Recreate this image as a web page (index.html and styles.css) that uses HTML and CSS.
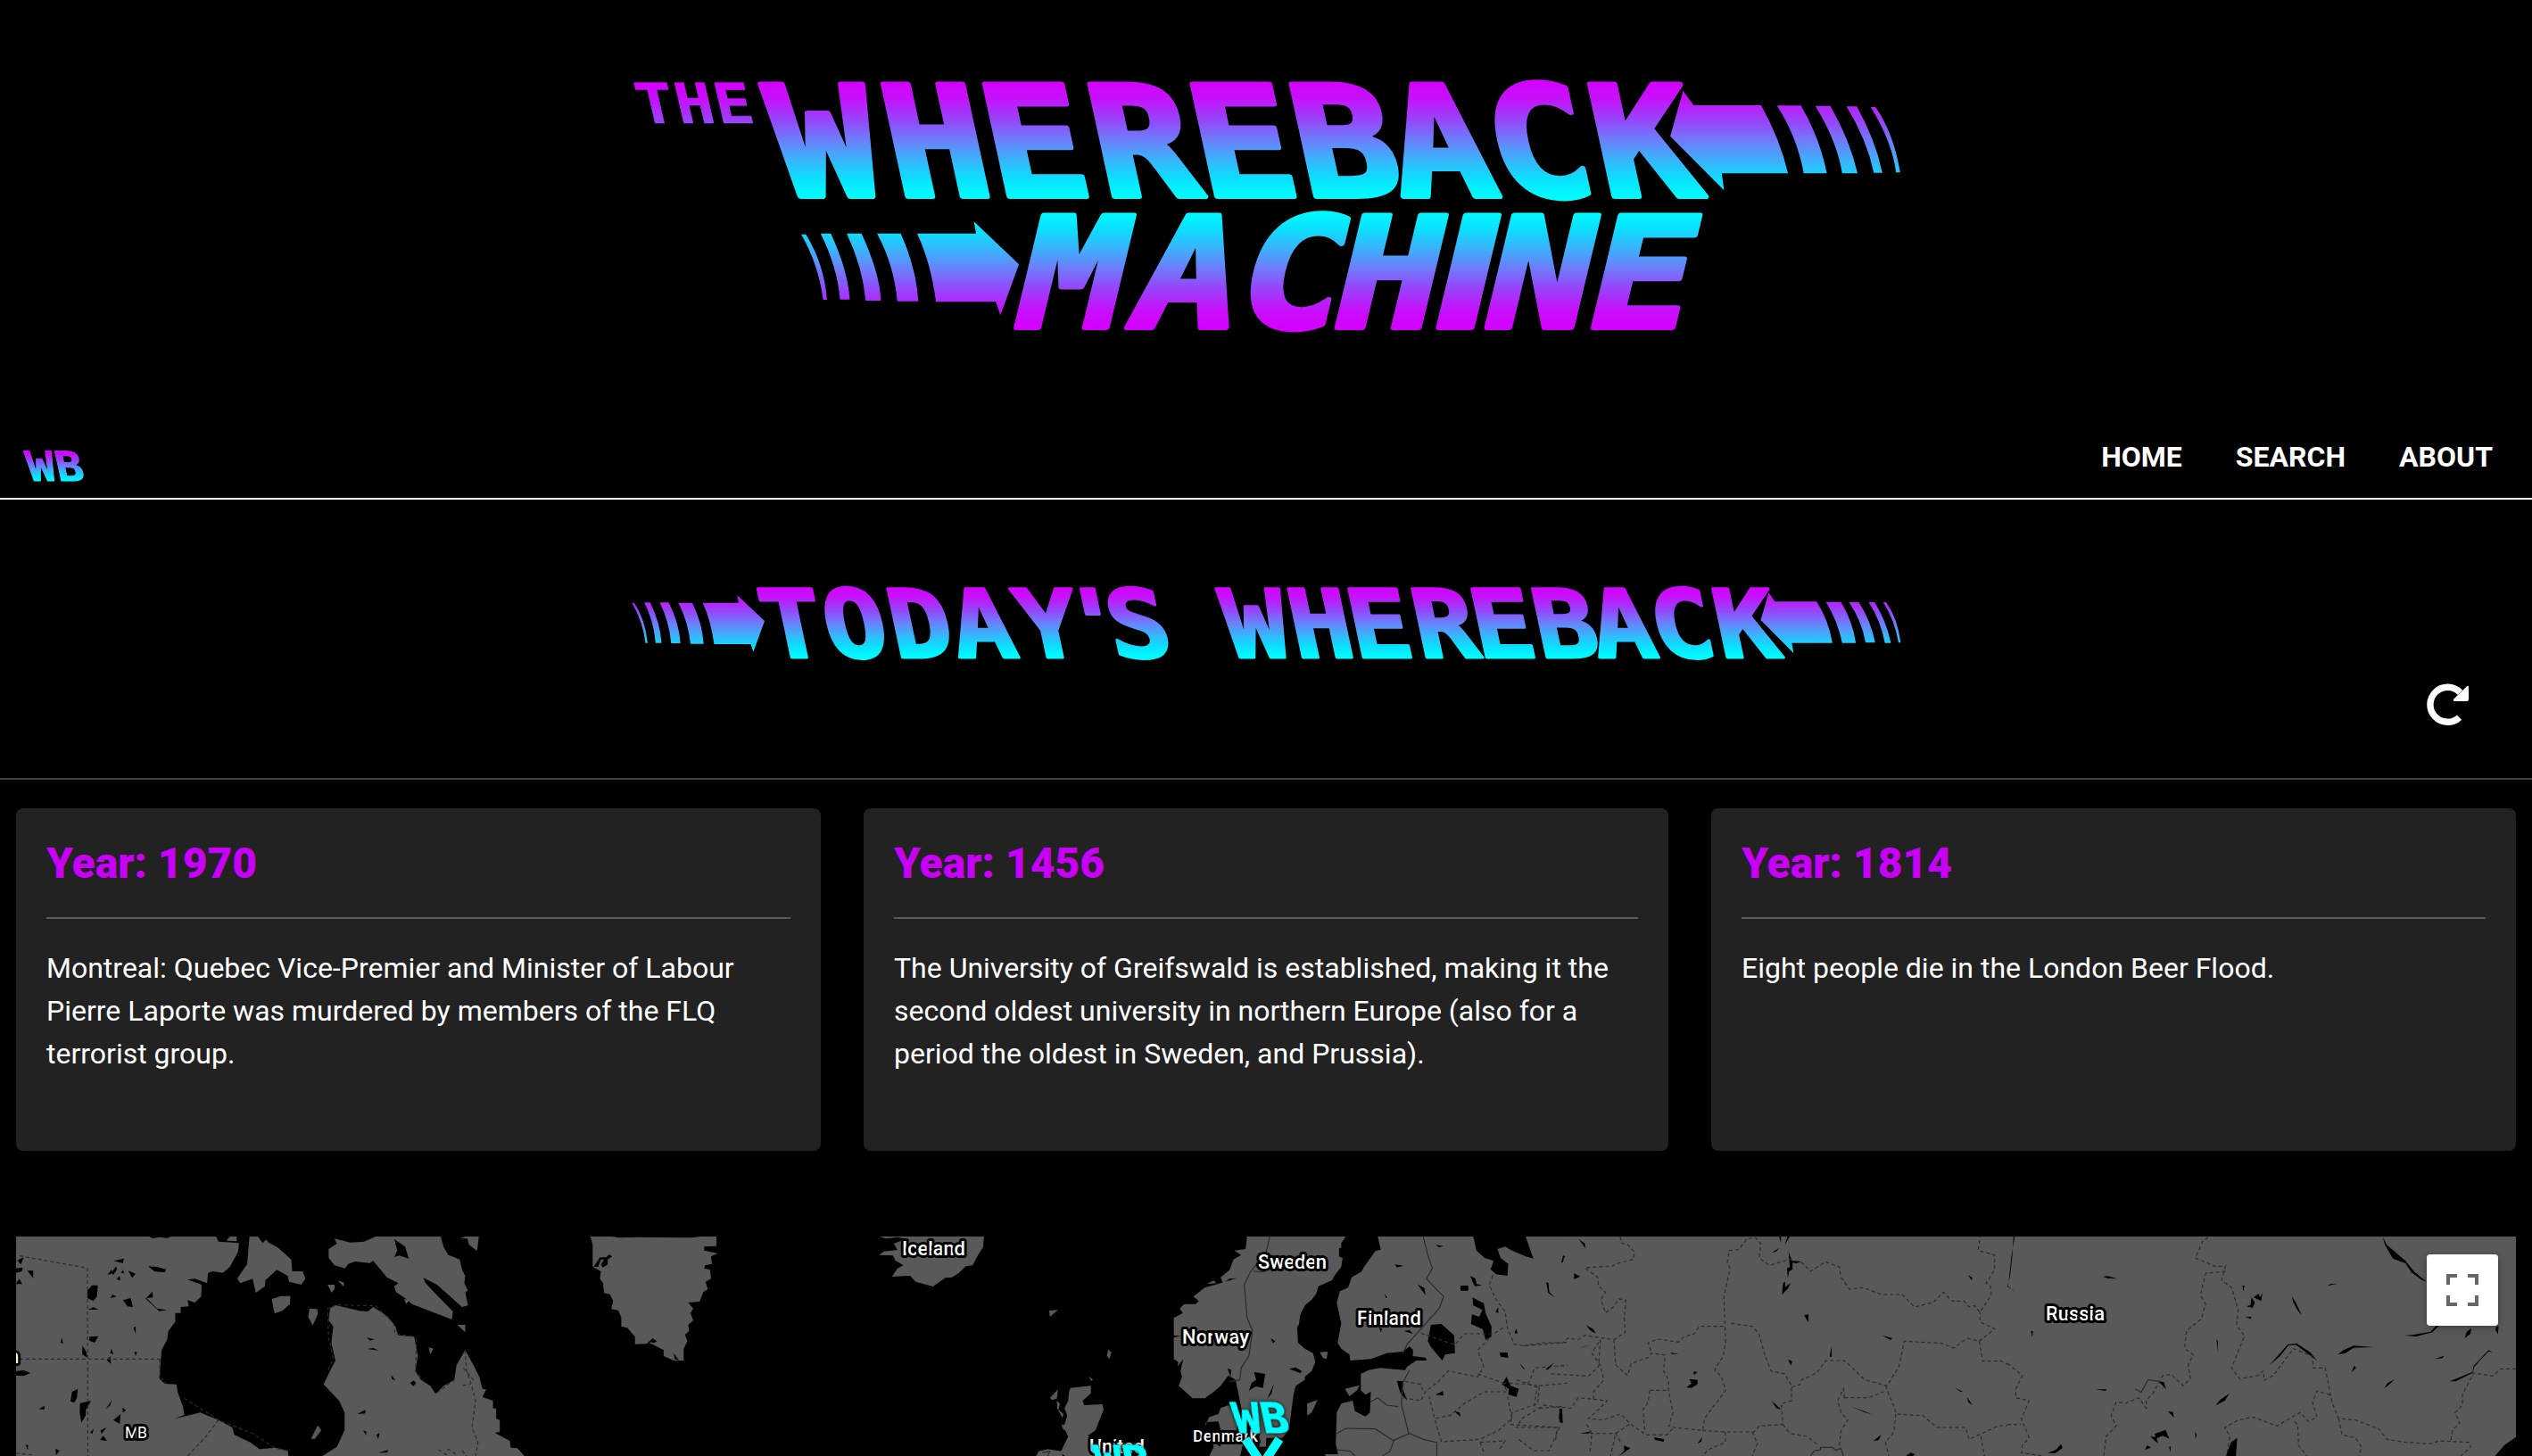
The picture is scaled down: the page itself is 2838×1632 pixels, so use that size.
FILE: index.html
```html
<!DOCTYPE html>
<html lang="en">
<head>
<meta charset="utf-8">
<title>The Whereback Machine</title>
<link rel="stylesheet" href="styles.css">
</head>
<body>
<svg class="defs" width="0" height="0" aria-hidden="true">
  <defs>
    <linearGradient id="word" gradientUnits="userSpaceOnUse" x1="0" y1="-130" x2="0" y2="0">
      <stop offset="0" stop-color="#d400ff"/><stop offset=".15" stop-color="#c710fb"/><stop offset=".35" stop-color="#9448fa"/><stop offset=".5" stop-color="#707afa"/><stop offset=".68" stop-color="#3bb2fc"/><stop offset=".85" stop-color="#0be0ff"/><stop offset="1" stop-color="#00fbff"/>
    </linearGradient>
    <linearGradient id="wordUp" href="#word" y1="0" y2="-130"/>
    <linearGradient id="small" href="#word" y1="-80" y2="0"/>
    <linearGradient id="mini" href="#word" y1="-35" y2="0"/>
    <linearGradient id="the" href="#word" y1="-46" y2="84"/>
    <linearGradient id="arrowTop" href="#word" y1="66" y2="457"/>
    <linearGradient id="arrowUp" href="#word" y1="897" y2="508"/>
    <linearGradient id="arrowSmall" href="#word" y1="54" y2="293"/>
  </defs>
</svg>

<header class="banner">
  <svg class="logo" viewBox="709 70 1421 320" role="img" aria-label="The Whereback Machine">
    <text class="face thin" transform="translate(0 138) skewX(13) scale(1.15 1)" fill="url(#the)" stroke="url(#the)" font-size="62" x="643 681 719">THE</text>
    <text class="face" transform="translate(0 220) skewX(12.300) scale(1.100 1)" fill="url(#word)" stroke="url(#word)" font-size="172" x="851.800 965.500 1066.400 1176.400 1278 1382.500 1479 1580 1687">WHEREBACK</text>
    <text class="face" transform="translate(0 367) skewX(-13.500) scale(1.130 1)" fill="url(#wordUp)" stroke="url(#wordUp)" font-size="172" x="1053 1167 1272 1367 1443.500 1517 1618.500">MACH<tspan class="plain">I</tspan>NE</text>
    <g transform="translate(1400 70) scale(.4783 .33333)" fill="url(#arrowTop)">
      <path d="M1017 96L1042 144H1200Q1245 260 1263 373H1108L1113 430L987 248Z"/>
      <path d="M1237 145H1293Q1337 250 1354 373H1300Q1284 250 1237 145ZM1327 146H1362Q1408 260 1426 373H1390Q1378 265 1327 146ZM1400 148H1424Q1468 260 1484 371H1464Q1448 260 1400 148ZM1457 150H1468Q1510 235 1526 370H1516Q1508 270 1457 150Z"/>
    </g>
    <g transform="translate(690 70) scale(.47194 .33333)" fill="url(#arrowUp)">
      <path d="M716 575H856L851 535L958 679L914 850L903 805H761Q748 670 716 575Z"/>
      <path d="M621 575H677Q714 690 719 803H669Q661 680 621 575ZM549 575H584Q628 710 630 801H594Q587 690 549 575ZM487 575H511Q552 700 556 797H533Q527 690 487 575ZM441 578H452Q496 680 502 798H493Q482 680 441 578Z"/>
    </g>
  </svg>
  <nav class="nav">
    <svg class="brand" viewBox="20 500 80 44" role="img" aria-label="WB">
      <text class="face hair" transform="translate(0 539) skewX(12.500) scale(1.120 1)" fill="url(#mini)" stroke="url(#mini)" font-size="46" x="44 72.500">WB</text>
    </svg>
    <div class="links"><a>HOME</a><a>SEARCH</a><a>ABOUT</a></div>
  </nav>
</header>

<section class="today">
  <svg class="today-title" viewBox="709 650 1421 100" role="img" aria-label="Today's Whereback">
    <text class="face medium" xml:space="preserve" transform="translate(0 736.500) skewX(12) scale(1.100 1)" fill="url(#small)" stroke="url(#small)" font-size="106" x="814.500 878 944.500 1008 1075 1123 1167 1223 1286 1352.700 1412.700 1479 1538 1602 1660 1721 1786">TODAY'S WHEREBACK</text>
    <g transform="translate(1400 640) scale(.4783 .33333)" fill="url(#arrowSmall)">
      <path d="M1218 73L1232 103H1330Q1358 165 1367 242H1272L1276 276L1199 165Z"/>
      <path d="M1352 104H1387Q1415 170 1422 242H1390Q1380 170 1352 104ZM1406 105H1429Q1458 170 1467 241H1445Q1435 165 1406 105ZM1452 105H1466Q1494 170 1504 242H1490Q1480 165 1452 105ZM1486 105H1493Q1520 160 1527 241H1522Q1513 165 1486 105Z"/>
    </g>
    <g transform="translate(690 640) scale(.47194 .33333)" fill="url(#arrowSmall)">
      <path d="M207 107H292L289 82L354 168L327 272L321 246H234Q226 165 207 107Z"/>
      <path d="M149 107H182Q206 175 209 245H178Q172 170 149 107ZM105 106H126Q151 175 154 243H132Q127 170 105 106ZM68 106H82Q106 175 109 242H95Q90 165 68 106ZM39 107H44Q70 160 76 242H71Q65 170 39 107Z"/>
    </g>
  </svg>
  <div class="tools">
    <svg class="refresh" viewBox="0 0 48 48" role="img" aria-label="Refresh">
      <path d="M36.600 38.200A19.500 19.500 0 1 1 37.500 10.300" fill="none" stroke="#fff" stroke-width="7.400"/>
      <path d="M45.300 3Q47 2.200 47 4.500V18Q47 20 45 20H32Q29 20 30.300 17.500Z" fill="#fff"/>
    </svg>
  </div>
</section>

<main class="content">
  <div class="cards">
    <article class="card"><h2>Year: 1970</h2><p>Montreal: Quebec Vice-Premier and Minister of Labour Pierre Laporte was murdered by members of the FLQ terrorist group.</p></article>
    <article class="card"><h2>Year: 1456</h2><p>The University of Greifswald is established, making it the second oldest university in northern Europe (also for a period the oldest in Sweden, and Prussia).</p></article>
    <article class="card"><h2>Year: 1814</h2><p>Eight people die in the London Beer Flood.</p></article>
  </div>

  <div class="map">
    <svg class="tiles" viewBox="18 1386 2802 246">
      <!-- North America and Greenland -->
      <g transform="translate(0 1370) scale(.5102 .33333)">
        <path class="land" d="M35 48H1152V786H35Z"/>
        <path class="water" d="M475 48L480 65 525 70 523 100 505 150 490 170 467 165 457 170 455 205 428 190 412 193 443 210 442 250 428 270 412 262 415 283 397 285 397 305 385 305 385 335 370 365 367 395 355 430 350 525 362 543 388 545 390 570 402 620 405 648 383 661 440 640 480 665 510 690 515 715 550 740 570 763 605 758 632 768 634 786H708L740 755 757 700 757 640 745 600 711 545 725 500 737 465 728 405 732 350 722 330 725 290 735 278 790 298 808 300 820 285 850 315 868 348 875 380 910 385 918 450 912 500 925 530 945 550 957 577 975 550 998 530 1003 480 1022 430 1040 480 1053 520 1060 560 1068 562 1060 588 1083 600 1083 625 1090 628 1090 660 1098 665 1098 705 1087 708 1120 735 1122 758 1137 760 1152 786H1300V48Z"/>
        <path class="land" d="M548 48L543 140 521 190 528 205 555 190 562 237 582 215 583 195 608 160 632 180 635 200 662 210 671 190 665 165 642 165 640 125 610 85 590 68 585 58 577 70 567 48Z"/>
        <path class="land" d="M735 55L770 68 800 65 825 48H968L975 85 985 110 1010 125 1015 160 1022 180 1020 205 1028 230 1022 235 1028 280 1015 285 960 210 930 187 935 205 960 245 995 300 993 327 905 275 890 255 870 235 866 215 875 205 850 185 820 130 812 137 780 132 765 140 758 155 735 145 722 120 722 90 740 72ZM1012 54L1027 55 1030 75 1048 97 1052 48H1022ZM597 258L617 248 638 248 637 275 620 298 603 307ZM680 290L697 292 698 310 687 347 677 318ZM720 210L735 210 735 225 728 237ZM742 196L756 203 755 217ZM1005 345H1022V370ZM942 420L952 425 945 445ZM683 728L698 683 706 700 692 728ZM497 62L505 48H520V64ZM888 258L900 262 892 275Z"/>
        <path class="land" d="M1297 48L1302 75V150L1320 165 1318 190 1325 205 1327 238 1340 242 1347 265 1343 292 1358 296 1365 320V350L1378 355 1395 385 1395 410 1430 408 1458 430 1458 450 1480 465H1502V425L1510 400 1505 378 1514 365 1512 345 1523 330 1517 305 1523 290 1512 270 1537 267 1545 235 1555 225 1550 200 1562 190 1560 160 1547 155 1549 145 1564 140 1562 115 1577 105 1547 95V82L1574 80V48Z"/>
        <path class="water" d="M866 57L890 82 898 122 878 112 866 117 873 95ZM192 230L202 212H215L213 250 205 265 192 255ZM250 130L272 122 270 138ZM325 148L345 150 365 158 362 168 340 166ZM236 178L245 158 247 172ZM246 168L255 148 257 160 248 178ZM256 193L262 180 265 195ZM270 160L273 172 266 170ZM282 163L298 173 290 187ZM60 163H73V188ZM35 155L50 152 48 165 35 170ZM38 128L52 118 46 142ZM35 208L42 190 49 208ZM243 255L247 243 256 250ZM270 262L287 255 292 285 280 283ZM193 294L205 286 217 293ZM335 233L336 253 322 255 345 290 367 295 350 299 320 257ZM197 385L216 383 208 405 196 398ZM181 415L190 437 192 455 181 445ZM133 405L136 388 139 408ZM293 355L298 350V375ZM242 440L245 425 249 444ZM235 465L242 450 244 476ZM295 436L301 437 298 450ZM35 500L53 498 67 507 52 517 35 515ZM155 602L158 570 171 560 169 590 163 607ZM176 608L200 600 189 630 188 650 179 674 175 640ZM233 628L246 597 242 616ZM249 665L265 645 263 678ZM85 628L98 617 97 630ZM198 706L206 696 203 712ZM221 700L234 690 223 712ZM220 732L227 718 235 735ZM56 748L62 750 61 766ZM122 762L131 768 123 783ZM269 623L277 632 270 640ZM806 388L822 394 813 398ZM806 426L820 423 832 431ZM859 514L869 531 861 528ZM785 645L803 630 802 643ZM798 700L805 704 804 716ZM827 715L834 708 831 730ZM831 775L853 766 850 775ZM901 541L909 532 914 541 908 551ZM1304 150L1318 118 1332 118 1338 108 1345 115 1335 125 1335 142 1325 152 1320 143 1327 125 1320 125 1314 150ZM1421 408L1434 390 1443 400 1437 406 1429 403 1425 412ZM1480 440L1492 465 1482 460ZM328 48H375L368 53 350 50 335 54ZM1345 48H1538L1520 52 1400 50 1360 52Z"/>
        <path class="border dash" d="M43 113L192 154 193 786M43 460H352M480 665L450 725 412 786M35 777L75 783M405 592L480 665 555 710 605 760 632 768M722 400L720 290 740 278 825 281 865 340 868 375 910 385M725 405L732 460 720 500M350 460L352 520 365 543M1022 430L1025 500 1035 545 1045 600 1037 690 1050 740 1045 786M1018 490L1040 530 1032 545 1015 550M963 765L985 786M983 762L1005 783M1015 768L1025 786M915 390L913 500 930 535M960 573L998 530"/>
      </g>

      <!-- Northern Europe -->
      <g transform="translate(960 1370) scale(.5102 .33333)">
        <path class="land" d="M50 48H280L278 85 267 110 255 145 240 148 225 170 210 185 195 187 168 216 130 200 118 180 78 183 90 155 103 145 85 128 80 112 50 110 60 98 90 93 82 72 98 62 118 58 90 50 65 55Z"/>
        <path class="land" d="M858 48H1075L1065 70 1065 85 1060 88 1060 115 1068 120 1065 150 1050 180 1045 195 1015 215 1010 240 1000 260 985 280 975 310 972 345 968 350 970 405 985 425 1003 440 1008 470 1000 500 985 520 985 530 965 550 960 580 955 640 950 700 935 725 900 725 900 755H885V700L850 660 833 530 817 515 800 550 785 570 765 592H738L708 550 715 520 712 500 718 460 705 485 707 470 697 460V322L717 305 710 290 720 275H745L752 265 740 250 765 220 800 205 835 188 820 190 805 205 800 185 820 160 828 125 845 110 830 95 855 90Z"/>
        <path class="land" d="M1145 48L1152 92 1140 97 1115 150 1110 165 1088 185 1080 220 1062 232 1055 270 1065 340 1057 405 1065 425 1083 445 1085 465 1130 460 1165 440 1200 435 1215 418 1223 430 1222 450 1250 455 1253 465 1230 465 1210 485 1205 497 1150 490 1125 497 1108 510 1108 565 1118 580 1130 570 1128 640 1118 653 1095 635 1090 600 1065 610 1055 640 1053 745 1058 780 1030 780V786H1570V48Z"/>
        <path class="land" d="M765 690L775 655 795 645 800 625 817 615 835 650V700L800 698 795 670 768 672ZM775 786L785 755 780 735 800 755 850 740 843 786ZM800 745H835V786H800ZM1018 437L1035 435 1033 460 1025 457ZM1073 560L1105 548 1100 565 1083 585ZM990 650V610L1013 597 1000 640ZM470 557L515 550 515 575 497 600 500 615 540 612 543 630 525 700 508 718 565 786H458L448 775 465 720 455 690 463 650 457 625 465 600 467 570ZM395 786L400 770 420 763 452 770V786ZM425 590L443 562 440 593 430 598ZM440 600L447 610 444 630 455 645 452 658 441 625ZM550 450L553 428 560 437 556 460ZM423 297L443 295 425 318ZM510 518L520 530 515 533ZM450 680L465 683 455 700ZM770 208L785 195 790 205Z"/>
        <path class="water" d="M873 503L898 510 893 557 877 552 862 567 868 540 878 530ZM902 595L917 543 912 575ZM950 493L965 488 978 500 975 507ZM910 390L920 400 915 407ZM695 380L712 382 697 388ZM815 492L823 495 822 520ZM1183 142L1202 146 1187 152ZM1232 208L1248 222 1250 245ZM1160 240L1166 253 1163 255ZM1203 366L1215 362 1222 375ZM1148 355L1155 358 1152 370ZM1272 76L1290 80 1280 84ZM1355 48H1470L1487 122 1470 115 1440 95 1425 82 1408 90 1415 120 1432 140 1430 180 1405 175 1393 158 1400 130 1380 120 1362 95ZM1255 400L1262 345 1285 342 1300 362 1313 380 1315 440 1293 445 1287 465 1262 420ZM1353 253L1378 272 1383 310 1395 350V385L1382 395 1376 360 1350 342 1352 310 1368 318 1375 295 1355 280ZM1348 180L1360 190 1362 208 1375 212 1358 215ZM1327 213H1344V230H1327ZM1404 302L1410 285V305ZM1413 438H1430L1432 456 1415 452ZM1418 545L1428 520 1437 550 1455 560 1450 587 1432 580 1433 560ZM1272 580L1288 568 1290 583ZM1313 635L1325 640 1327 655ZM1187 533L1202 535 1200 560 1210 600 1195 575ZM1457 473L1469 496 1463 490ZM1513 497L1533 472 1520 490ZM1515 202L1520 205 1522 235 1535 253 1522 240ZM1445 372L1450 358 1452 375ZM1548 135L1555 110 1552 135ZM1545 625L1550 630 1549 675 1543 660Z"/>
        <path class="border" d="M908 48L900 100 865 168 852 210 858 320 870 365 862 450 845 490 842 530 820 536M897 167L872 165M1245 48L1255 110 1265 155 1252 190 1290 250 1280 290 1210 410 1200 440M1215 497L1200 540 1197 610 1213 710M1128 605L1145 590 1165 615 1190 620M1055 710L1075 693 1140 695 1180 735 1172 770 1155 786M1180 733L1215 710 1245 730 1275 740V786M1055 765L1085 770 1095 786M408 775L425 770 420 786"/>
        <path class="border dash" d="M1398 178L1390 210 1405 260 1425 300 1430 355 1445 410 1465 415 1568 403M1240 373L1315 412 1335 375H1400L1425 350M1390 390L1365 430 1378 485 1365 520 1300 500 1275 540 1250 570 1240 600 1200 590M1365 510L1420 540 1430 570 1380 570 1335 610 1305 650 1270 660 1258 585M1420 540L1475 545 1500 550 1497 610 1440 640 1437 680 1540 690 1535 740M1430 585L1440 660 1410 700 1370 730 1285 738 1270 660M1205 535L1240 545 1245 570M1500 550L1568 540M1500 625L1550 620M1370 740L1380 780M1370 740L1425 735 1410 770M1475 545L1490 490 1568 480"/>
      </g>

      <!-- Western Russia -->
      <g transform="translate(1700 1370) scale(.38265 .33333)">
        <path class="land" d="M150 48H1470V786H150Z"/>
        <path class="water" d="M182 57L200 72 201 87ZM132 130L136 112 142 115ZM168 172L186 182 168 192ZM87 202L92 205 95 238 113 253 92 237ZM203 346L225 360 232 374 217 365ZM185 422L218 411 192 421ZM84 495L110 472 92 495ZM768 48H774V68ZM785 76L793 48H800ZM747 102L770 86 760 98ZM796 97L806 130 835 132 820 138 808 136 808 158 798 165 794 188 792 155 800 150ZM780 205L787 200 786 218 802 205 795 222 777 244ZM842 312L855 310 854 337ZM1070 380L1100 390 1095 396ZM922 416L923 452 917 452ZM795 461L807 468 803 482ZM450 438L475 443 455 443ZM518 502L530 504 519 513ZM506 527L530 530 529 545 512 557 497 555 512 543ZM747 600L775 630 760 625ZM978 619L1040 645 1020 640ZM1283 556L1307 570 1300 570ZM1319 588L1335 615 1323 605ZM1045 735L1068 714 1060 733ZM1142 783L1155 775 1167 781 1160 786H1142ZM402 723L432 730 430 738 405 732ZM529 745L544 722 540 738ZM314 751L333 760 300 786 315 768ZM125 628H133L135 675 126 673ZM185 710L220 703 210 710ZM1322 178L1335 187 1332 195ZM1505 366H1512L1509 384ZM1456 48H1461L1450 180 1441 215 1455 226 1488 278 1452 230 1438 217 1448 180Z"/>
        <path class="border dash" d="M303 48L307 70 325 75 345 100 342 125 300 137 280 147 200 153 237 185 240 215 260 235 247 260 260 305 282 285 300 258 320 262 315 320 318 370 285 395 225 385 200 380 180 395 150 390 135 405 80 405 20 415M285 395L290 480 325 515 335 475 385 455 395 440 435 447 430 500 445 530V570L458 640 445 685 460 690 545 700 550 660 575 620 590 600 612 565 600 520 580 495 605 450 612 400 610 340 607 250 625 155 617 135 622 95 650 92 675 55 700 52 715 72 710 120 740 145 800 125 835 135 860 165 905 133 945 150 950 185 975 225 1015 220 1070 243H1130L1165 285 1220 270 1250 235 1275 265 1310 265 1325 285 1340 280 1357 303 1390 245 1388 215 1375 205 1400 160 1400 110 1352 95 1357 48M605 350H535L520 375 490 385 475 403 415 393 385 405 395 440M628 340L690 350 710 375 725 440 745 500 785 510 805 550 805 600 775 610 780 680 710 685 695 705 610 705 545 700M805 555L830 545 835 530 880 505 905 465H960L1020 530 1085 550 1120 485 1135 400 1245 407 1280 423 1320 390 1355 400 1400 358 1357 335V303M1355 400L1365 467H1420L1450 485 1485 518 1462 560 1465 590 1500 600 1480 650V680L1500 725 1480 750V786M1080 550L1105 620 1112 645 1190 650 1230 690 1315 690 1325 730 1410 685 1480 680M1360 720L1370 786M960 590H1030L1075 570M960 590L957 560 940 600 950 640 970 665 950 700 945 750M780 680L800 710 850 720 885 750M1110 645L1105 705 1080 740 1090 786M100 510L210 517 240 485 245 395 220 440 245 480 255 530 225 570 225 595 180 590 160 625 110 620 80 615 15 660 0 690 125 690 95 768 50 768 0 725M0 530L60 555 50 630M225 595L265 600 235 635 210 660 250 665 305 645 335 680 380 715 440 715 460 690M205 680L220 710 215 770M215 710L290 710 305 740M330 680L290 710 275 786M390 565H445M390 565L385 605 370 630 375 700M610 705L612 740 560 765 545 786M690 705L705 745 690 786"/>
        <path class="border" d="M860 786L872 768 890 765V757H925L935 767 950 760 957 786"/>
      </g>

      <!-- Eastern Russia -->
      <g transform="translate(2250 1370) scale(.375 .33333)">
        <path class="land" d="M0 48H1520V786H0Z"/>
        <path class="water" d="M1122 48L1133 75 1190 130 1215 165 1253 200 1240 195 1207 168 1190 138 1152 122 1128 75ZM1187 381L1215 378 1265 368 1282 348H1290L1270 370 1222 384ZM1387 357L1384 375 1367 390 1373 368ZM1458 360L1463 348 1468 352 1466 377ZM987 445L1005 430 1035 415 1095 420 1035 422 1010 440ZM1276 460L1305 449 1300 457ZM1322 535L1350 522 1390 503 1393 484 1438 430 1450 437 1438 434 1396 485 1390 507 1340 535ZM1028 505L1037 482 1042 490ZM1126 558L1137 540 1157 529 1137 550ZM783 481L838 411 864 407 905 437 925 465 862 412 840 414 815 450ZM850 250L861 268 880 312 868 297 855 270ZM957 214L965 208 987 206ZM285 183L300 181 328 190 300 188ZM702 213H709L705 232ZM736 253L750 240 755 252 762 238 759 265ZM729 252L740 270 733 288 715 283 727 278ZM710 317L730 318 727 325ZM625 393L629 400 630 441ZM70 366H77L74 386ZM263 562L296 562 294 567ZM623 615L635 598 663 576 650 600ZM480 636L495 638 498 657ZM427 721L443 722 440 712 473 698 484 728 465 718 446 726 450 744ZM411 765L418 750 429 758ZM120 776L145 765 160 746 165 759 143 776ZM483 755L488 754V774ZM561 704L566 715 562 730ZM653 786L668 740 687 725 683 786ZM452 535L468 538 474 562ZM1457 786L1485 750 1520 722V786Z"/>
        <path class="water" d="M22 48L12 115 2 215 20 231 52 278 18 228 0 217 8 180 15 110 18 48Z"/>
        <path class="border" d="M382 560L400 572 420 530 455 535"/>
        <path class="border dash" d="M600 52L585 60 562 120 620 148H652L640 195 670 220 690 295 685 345 708 383 670 490 695 527 750 515 765 500 768 532 795 515 855 425 910 450 915 490 950 490 970 605 990 660 1040 665 1110 695 1135 730 1190 740 1265 745 1290 735 1380 740 1385 755 1355 786M652 165L593 172 577 245 592 275 580 325 535 365 530 425 555 445 540 480 547 525 525 550 490 512 465 515 435 575 415 600 415 625 392 590 355 608 325 605 310 650 325 685 295 720 288 786M990 660L1000 715 1040 725 1058 755 1050 786M965 580L925 568 912 605 925 655 900 670 875 640 805 685 735 655 690 665 650 690 665 720 655 786M858 670L868 680 870 750 895 786M1520 493L1475 493 1450 517 1393 507 1360 580V615L1338 640 1352 675 1330 700 1325 735M0 475L45 515 25 560V590L65 600 42 660 65 725 45 750 42 775 110 786M0 680H40"/>
      </g>

      <g class="labels">
        <text x="1011" y="1407" textLength="71" font-size="22">Iceland</text>
        <text x="1410" y="1422" textLength="77" font-size="22">Sweden</text>
        <text x="1521" y="1485" textLength="72" font-size="22">Finland</text>
        <text x="1325" y="1506" textLength="75" font-size="22">Norway</text>
        <text x="2293" y="1480" textLength="66" font-size="22">Russia</text>
        <text x="1337" y="1616" textLength="73" font-size="18">Denmark</text>
        <text x="1221" y="1629" textLength="62" font-size="22">United</text>
        <text class="region" x="140" y="1612" textLength="25" font-size="17.500">MB</text>
        <text x="9" y="1528" font-size="22">n</text>
      </g>
      <g class="pins">
        <text class="face pin" transform="translate(0 1606) skewX(12) scale(1.080 1)" font-size="47" x="1297 1326">WB</text>
        <path class="pin-tip" d="M1396 1613L1415 1642 1434 1613"/>
        <text class="face pin" transform="translate(0 1654) skewX(12) scale(1.080 1)" font-size="47" x="1154 1183">WB</text>
      </g>
    </svg>
    <button class="fullscreen" aria-label="Toggle fullscreen">
      <svg viewBox="0 0 36 36"><path d="M2 12V2H12M24 2H34V12M34 24V34H24M12 34H2V24" fill="none" stroke="#666" stroke-width="4"/></svg>
    </button>
  </div>
</main>
</body>
</html>
```
FILE: styles.css
```css
* { box-sizing: border-box; }
html { background: #000; }
body {
  margin: 0;
  height: 1632px;
  overflow: hidden;
  background: #000;
  color: #fff;
  font-family: Roboto, "Liberation Sans", sans-serif;
  font-size: 32px;
  line-height: 48px;
}
svg { display: block; }
.defs { position: absolute; }

.banner {
  height: 560px;
  padding-top: 70px;
  border-bottom: 2px solid #fff;
  display: flex;
  flex-direction: column;
  justify-content: space-between;
}
.logo { width: 1421px; height: 320px; margin: 0 auto; overflow: visible; }
.face {
  font-family: "DejaVu Sans Mono", monospace;
  font-weight: 700;
  text-anchor: middle;
  stroke-width: 6px;
  stroke-linejoin: round;
}
.face.thin { stroke-width: .5px; }
.face.medium { stroke-width: 3px; }
.face.hair { stroke-width: 1px; }
.plain { font-family: "DejaVu Sans", sans-serif; }

.nav {
  display: flex;
  justify-content: space-between;
  align-items: center;
  height: 92px;
  padding: 0 44px 0 20px;
}
.brand { width: 80px; height: 44px; margin-top: 20px; overflow: visible; }
.links { display: flex; gap: 60px; font-weight: 700; }

.today {
  height: 314px;
  padding-top: 90px;
  border-bottom: 2px solid #414141;
}
.today-title { width: 1421px; height: 100px; margin: 0 auto; overflow: visible; }
.tools { display: flex; justify-content: flex-end; padding: 16px 70px 0 0; }
.refresh { width: 48px; height: 48px; }

.content { padding: 32px 18px 0; }
.cards { display: grid; grid-template-columns: repeat(3, 1fr); gap: 48px; }
.card {
  height: 384px;
  padding: 33px 34px;
  border-radius: 8px;
  background: #222;
}
.card h2 {
  margin: 0 0 31px;
  height: 91px;
  border-bottom: 2px solid #5a5a5a;
  color: #c800f5;
  font-size: 48px;
  line-height: 58px;
  font-weight: 900;
}
.card p { margin: 0; }

.map { position: relative; height: 246px; margin-top: 96px; overflow: hidden; }
.tiles { width: 2802px; height: 246px; }
.land { fill: #595959; }
.water { fill: #000; }
.border {
  fill: none;
  stroke: #2b2b2b;
  stroke-width: 1.2px;
  vector-effect: non-scaling-stroke;
}
.dash { stroke-dasharray: 4 3; }
.labels {
  fill: #fff;
  stroke: #000;
  stroke-width: 6px;
  stroke-linejoin: round;
  paint-order: stroke;
  font-weight: 500;
}
.region { font-weight: 400; }
.face.pin { fill: #0ff; stroke: #0ff; stroke-width: 1px; filter: drop-shadow(0 0 2px #000); }
.pin-tip { fill: none; stroke: #0ff; stroke-width: 10px; filter: drop-shadow(0 0 2px #000); }
.fullscreen {
  position: absolute;
  top: 20px;
  right: 20px;
  width: 80px;
  height: 80px;
  padding: 22px;
  border: 0;
  border-radius: 4px;
  background: #fff;
  box-shadow: 0 2px 8px rgba(0, 0, 0, .3);
}
.fullscreen svg { width: 36px; height: 36px; }
```
